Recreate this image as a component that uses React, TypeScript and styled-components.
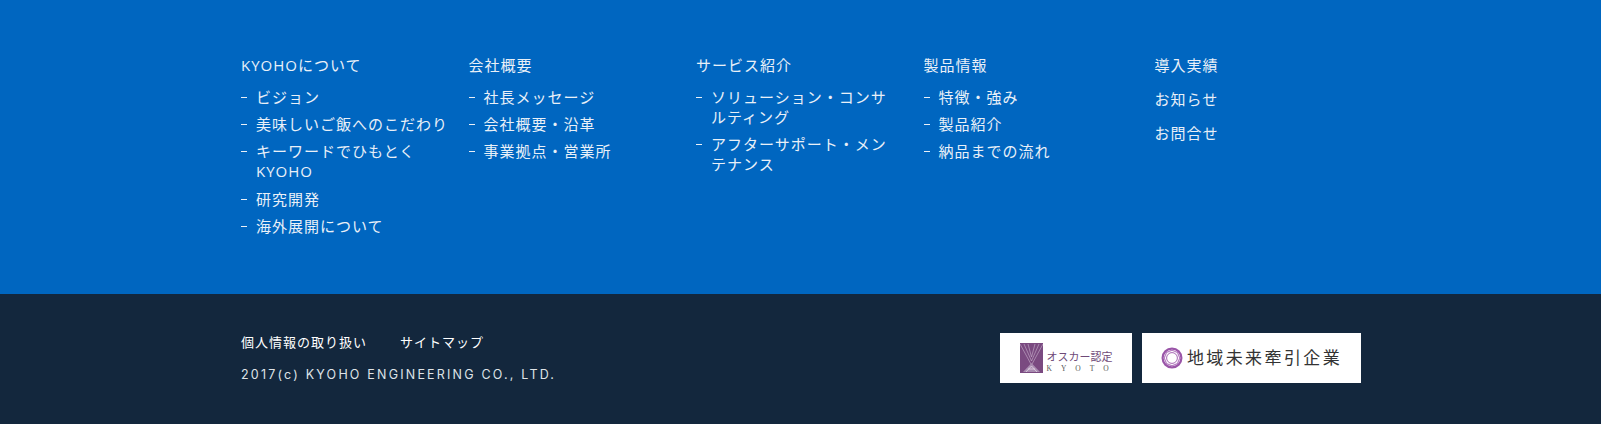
import { createGlobalStyle } from "styled-components";
import styled from "styled-components";

const navColumns = [
  {
    title: "KYOHOについて",
    items: ["ビジョン", "美味しいご飯へのこだわり", "キーワードでひもとく KYOHO", "研究開発", "海外展開について"],
  },
  {
    title: "会社概要",
    items: ["社長メッセージ", "会社概要・沿革", "事業拠点・営業所"],
  },
  {
    title: "サービス紹介",
    items: ["ソリューション・コンサルティング", "アフターサポート・メンテナンス"],
    narrow: true,
  },
  {
    title: "製品情報",
    items: ["特徴・強み", "製品紹介", "納品までの流れ"],
  },
];

const sideLinks = ["導入実績", "お知らせ", "お問合せ"];

const App = () => {
  return (
    <>
      <GlobalStyle />
      <NavSection>
        <NavInner>
          {navColumns.map((col) => (
            <NavColumn key={col.title} $narrow={col.narrow}>
              <ColumnTitle>{col.title}</ColumnTitle>
              <ItemList>
                {col.items.map((item) => (
                  <Item key={item}>{item}</Item>
                ))}
              </ItemList>
            </NavColumn>
          ))}
          <SideColumn>
            {sideLinks.map((link) => (
              <SideLink key={link}>{link}</SideLink>
            ))}
          </SideColumn>
        </NavInner>
      </NavSection>
      <BottomSection>
        <BottomInner>
          <div>
            <SubLinks>
              <SubLink>個人情報の取り扱い</SubLink>
              <SubLink>サイトマップ</SubLink>
            </SubLinks>
            <Copyright>2017(c) KYOHO ENGINEERING CO., LTD.</Copyright>
          </div>
          <Badges>
            <OscarBadge>
              <svg width="23" height="30" viewBox="0 0 23 30">
                <rect width="23" height="30" fill="#7a4a80" />
                <path d="M0 1L11.5 22L23 1M4 1L11.5 18L19 1M8 1L11.5 14L15 1" fill="none" stroke="#c9b3cc" strokeWidth="0.6" />
                <path d="M3 29L11.5 20L20 29H3Z" fill="#a98bb0" />
                <path d="M6 29L11.5 23L17 29M8 26H15" fill="none" stroke="#e8deea" strokeWidth="0.7" />
              </svg>
              <OscarText>
                <OscarName>オスカー認定</OscarName>
                <OscarCity>KYOTO</OscarCity>
              </OscarText>
            </OscarBadge>
            <RegionBadge>
              <svg width="22" height="22" viewBox="0 0 22 22">
                <circle cx="11" cy="11" r="9.4" fill="none" stroke="#9a55a8" strokeWidth="2.2" />
                <path d="M11 3.2L16.5 5.5L18.8 11L16.5 16.5L11 18.8L5.5 16.5L3.2 11L5.5 5.5Z" fill="none" stroke="#b77ec2" strokeWidth="1.2" />
                <circle cx="11" cy="11" r="5.4" fill="none" stroke="#a565b2" strokeWidth="1" />
              </svg>
              <RegionName>地域未来牽引企業</RegionName>
            </RegionBadge>
          </Badges>
        </BottomInner>
      </BottomSection>
    </>
  );
};

const GlobalStyle = createGlobalStyle`
  html, body {
    margin: 0;
    padding: 0;
  }
  body {
    font-family: "Open Sans", "Noto Sans CJK JP", sans-serif;
    color: #fff;
  }
  ul {
    margin: 0;
    padding: 0;
    list-style: none;
  }
`;

const NavSection = styled.div`
  height: 294px;
  background: #0066c0;
  box-sizing: border-box;
  padding: 53px 0 0 241px;
`;

const NavInner = styled.div`
  display: flex;
`;

const NavColumn = styled.div<{ $narrow?: boolean }>`
  width: 227.5px;
  flex-shrink: 0;
  padding-right: ${(p) => (p.$narrow ? "32px" : "19px")};
  box-sizing: border-box;
`;

const ColumnTitle = styled.div`
  font-size: 15px;
  line-height: 24px;
  letter-spacing: 1px;
  color: #e9f0f8;
`;

const ItemList = styled.ul`
  margin-top: 10px;
  display: flex;
  flex-direction: column;
  gap: 7.2px;
`;

const Item = styled.li`
  position: relative;
  padding-left: 15px;
  font-size: 15px;
  line-height: 20px;
  letter-spacing: 1px;
  color: #e9f0f8;

  &::before {
    content: "";
    position: absolute;
    left: 0;
    top: 10px;
    width: 6px;
    height: 1px;
    background: #e9f0f8;
  }
`;

const SideColumn = styled.div`
  margin-left: 3.5px;
  display: flex;
  flex-direction: column;
  gap: 10px;
`;

const SideLink = styled.div`
  font-size: 15px;
  line-height: 24px;
  letter-spacing: 1px;
  color: #e9f0f8;
`;

const BottomSection = styled.div`
  height: 130px;
  background: #13273d;
  box-sizing: border-box;
  padding: 39px 240px 0 241px;
`;

const BottomInner = styled.div`
  display: flex;
  justify-content: space-between;
  align-items: flex-start;
`;

const SubLinks = styled.div`
  display: flex;
  gap: 33px;
  height: 18px;
`;

const SubLink = styled.span`
  font-size: 13px;
  line-height: 18px;
  letter-spacing: 1px;
  color: #ffffff;
`;

const Copyright = styled.div`
  margin-top: 16px;
  font-family: Inter, "Liberation Sans", sans-serif;
  font-size: 12.5px;
  line-height: 16px;
  letter-spacing: 2.2px;
  color: #dfe3e7;
`;

const Badges = styled.div`
  display: flex;
  gap: 10px;
`;

const OscarBadge = styled.div`
  width: 132px;
  height: 50px;
  background: #fff;
  display: flex;
  align-items: center;
  justify-content: center;
  gap: 4px;
`;

const OscarText = styled.div`
  display: flex;
  flex-direction: column;
  padding-top: 7px;
`;

const OscarName = styled.span`
  font-family: "Noto Sans CJK JP", sans-serif;
  font-size: 11px;
  line-height: 14px;
  color: #6f4a78;
`;

const OscarCity = styled.span`
  margin-top: 1px;
  font-family: "Liberation Serif", serif;
  font-size: 7.5px;
  line-height: 10px;
  letter-spacing: 9px;
  margin-right: -9px;
  color: #555;
`;

const RegionBadge = styled.div`
  width: 219px;
  height: 50px;
  background: #fff;
  display: flex;
  align-items: center;
  justify-content: center;
  gap: 4px;
`;

const RegionName = styled.span`
  font-size: 17px;
  line-height: 24px;
  letter-spacing: 2.4px;
  color: #333;
`;

export default App;
